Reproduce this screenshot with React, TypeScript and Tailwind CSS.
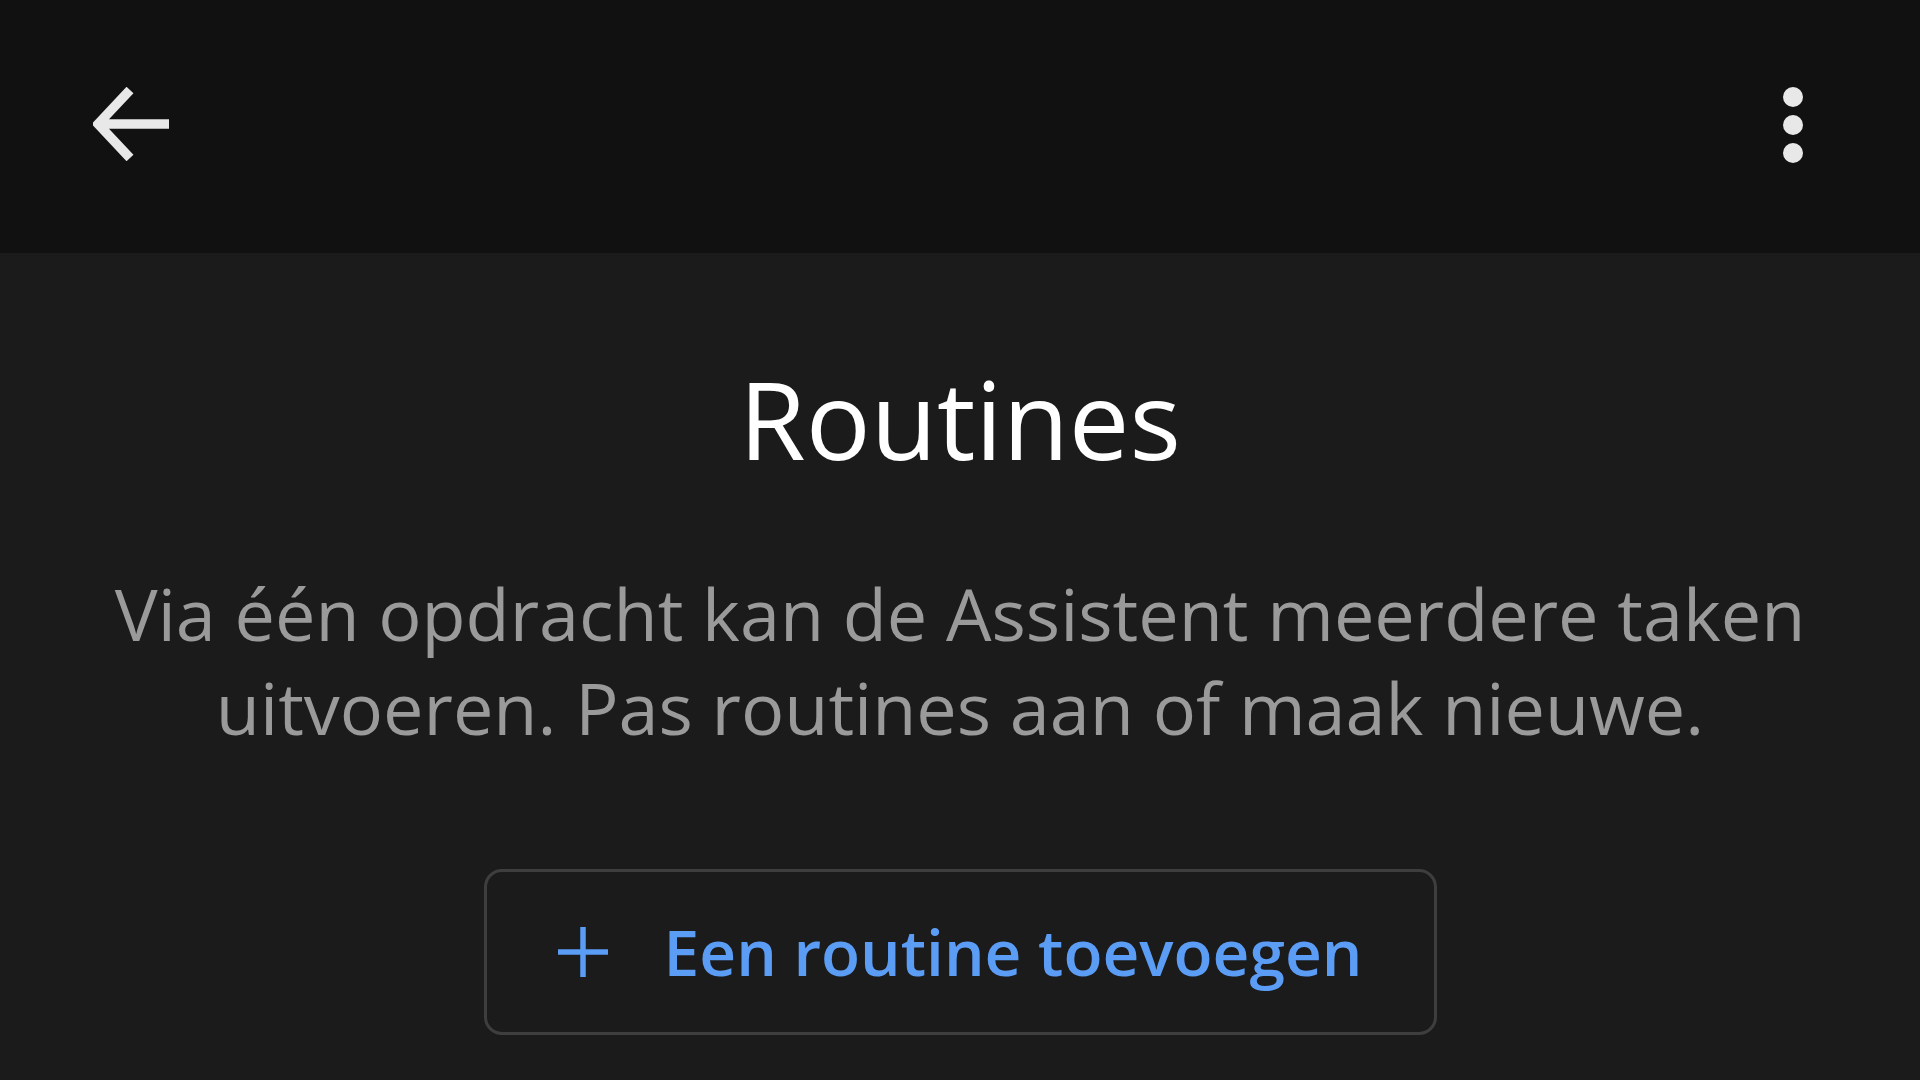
export default function App() {
  return (
    <div className="w-[1920px] h-[1080px] overflow-hidden bg-[#1b1b1b]" style={{ fontFamily: '"Open Sans", "Noto Sans", sans-serif' }}>
      <div className="h-[253px] bg-[#111111] flex items-start justify-between pl-[93px] pr-[117px] pt-[87px]">
        <svg width="78" height="74" viewBox="0 0 78 74" className="text-[#e8e8e8]">
          <path d="M37 3 L5 37 L37 71 M5 37 L76 37" fill="none" stroke="currentColor" strokeWidth="9.5" strokeLinecap="butt" strokeLinejoin="miter" />
        </svg>
        <div className="flex flex-col items-center gap-[8px]">
          <div className="w-[20px] h-[20px] rounded-full bg-[#e8e8e8]" />
          <div className="w-[20px] h-[20px] rounded-full bg-[#e8e8e8]" />
          <div className="w-[20px] h-[20px] rounded-full bg-[#e8e8e8]" />
        </div>
      </div>
      <div className="flex flex-col items-center">
        <h1 className="mt-[112px] text-[108px] leading-[1] text-white font-normal">Routines</h1>
        <p className="mt-[93px] text-[72px] leading-[94px] text-[#9a9a9a] text-center whitespace-nowrap">
          Via één opdracht kan de Assistent meerdere taken
          <br />
          uitvoeren. Pas routines aan of maak nieuwe.
        </p>
        <button className="mt-[115px] w-[953px] h-[166px] border-[3px] border-[#3e3e3e] rounded-[18px] flex items-center justify-center gap-[56px] text-[#5b9cf5]">
          <svg width="50" height="50" viewBox="0 0 50 50">
            <path d="M25 0 V50 M0 25 H50" stroke="currentColor" strokeWidth="5.5" />
          </svg>
          <span className="text-[64px] font-semibold leading-none">Een routine toevoegen</span>
        </button>
      </div>
    </div>
  );
}
